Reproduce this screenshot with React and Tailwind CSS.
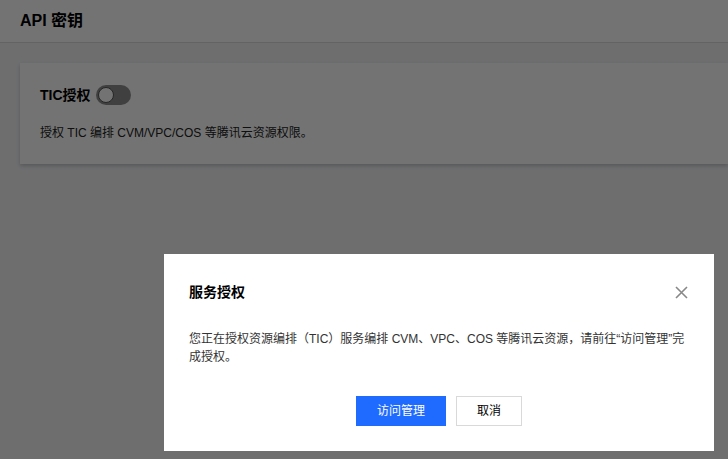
import React from "react";

export default function App() {
  return (
    <div
      className="relative h-[459px] w-[728px] overflow-hidden bg-[#f3f4f7] text-[#000000]"
      style={{ fontFamily: '"Liberation Sans", "Noto Sans CJK SC", sans-serif' }}
    >
      {/* Header */}
      <div className="flex h-[43px] items-center border-b border-[#dcdcdc] bg-white px-5">
        <h1 className="text-[16px] font-bold">API 密钥</h1>
      </div>

      {/* Content */}
      <div className="pl-5 pt-5">
        <div className="bg-white px-5 pb-[21px] pt-[22px] shadow-[0_2px_4px_rgba(0,0,0,0.2)]">
          <div className="flex items-center gap-[5px]">
            <span className="text-[14px] font-bold leading-5">TIC授权</span>
            <button
              type="button"
              className="relative h-5 w-[35px] rounded-full bg-[#8f8f8f]"
            >
              <span className="absolute left-[2px] top-[2px] h-4 w-4 rounded-full border border-[#555] bg-white" />
            </button>
          </div>
          <p className="mt-[18px] text-[12px] leading-5 text-[#222]">
            授权 TIC 编排 CVM/VPC/COS 等腾讯云资源权限。
          </p>
        </div>
      </div>

      {/* Overlay */}
      <div className="absolute inset-0 bg-black/55" />

      {/* Modal */}
      <div className="absolute left-[164px] top-[254px] w-[550px] bg-white px-[25px] pb-[25px] pt-[30px]">
        <div className="flex items-center justify-between">
          <h2 className="text-[14px] font-bold leading-4">服务授权</h2>
          <button type="button" className="mr-[1px] text-[#888]">
            <svg width="13" height="13" viewBox="0 0 13 13" fill="none">
              <path d="M1 1L12 12M12 1L1 12" stroke="currentColor" strokeWidth="1.6" />
            </svg>
          </button>
        </div>
        <p className="mt-[30px] text-[12px] leading-[18px] text-[#333]">
          您正在授权资源编排（TIC）服务编排 CVM、VPC、COS 等腾讯云资源，请前往“访问管理”完成授权。
        </p>
        <div className="mt-[30px] flex justify-center gap-[10px]">
          <button
            type="button"
            className="h-[30px] w-[90px] bg-[#1f6bff] text-[12px] text-white"
          >
            访问管理
          </button>
          <button
            type="button"
            className="h-[30px] w-[66px] border border-[#d9d9d9] bg-white text-[12px] text-[#000]"
          >
            取消
          </button>
        </div>
      </div>
    </div>
  );
}
